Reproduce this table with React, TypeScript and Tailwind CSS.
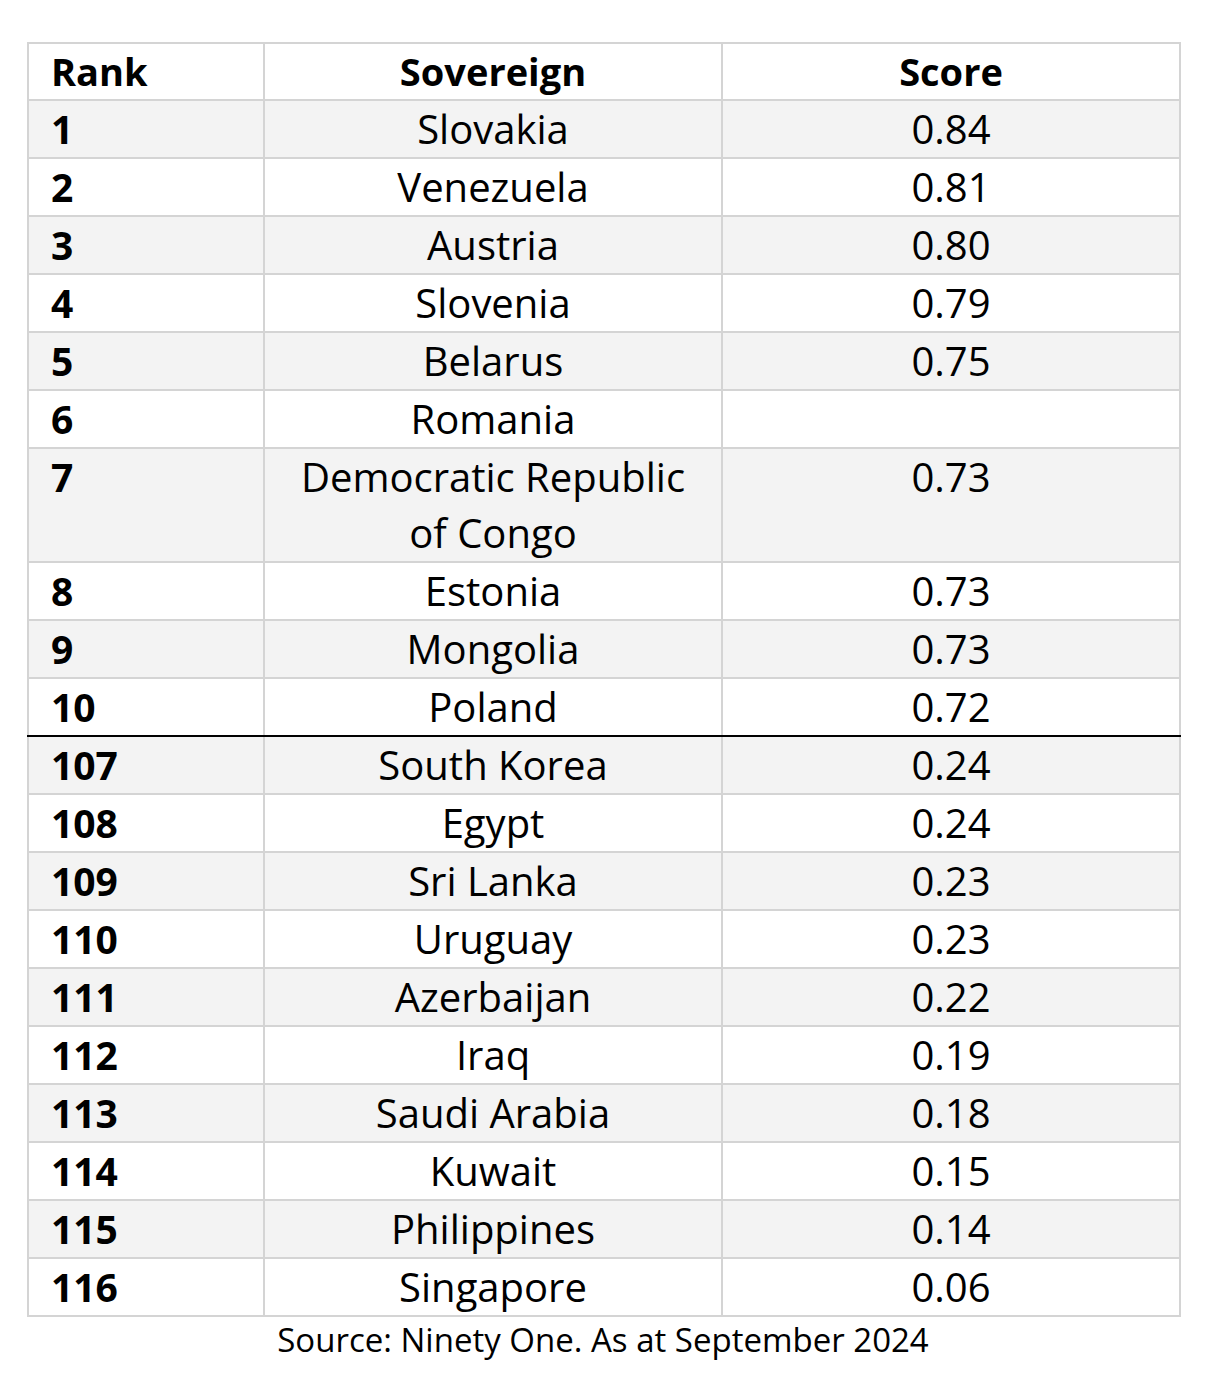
const rows: [string, string, string][] = [
  ["1", "Slovakia", "0.84"],
  ["2", "Venezuela", "0.81"],
  ["3", "Austria", "0.80"],
  ["4", "Slovenia", "0.79"],
  ["5", "Belarus", "0.75"],
  ["6", "Romania", ""],
  ["7", "Democratic Republic of Congo", "0.73"],
  ["8", "Estonia", "0.73"],
  ["9", "Mongolia", "0.73"],
  ["10", "Poland", "0.72"],
  ["107", "South Korea", "0.24"],
  ["108", "Egypt", "0.24"],
  ["109", "Sri Lanka", "0.23"],
  ["110", "Uruguay", "0.23"],
  ["111", "Azerbaijan", "0.22"],
  ["112", "Iraq", "0.19"],
  ["113", "Saudi Arabia", "0.18"],
  ["114", "Kuwait", "0.15"],
  ["115", "Philippines", "0.14"],
  ["116", "Singapore", "0.06"],
];

export default function App() {
  return (
    <div
      className="min-h-[1399px] bg-white pl-[27px] pt-[42px] text-black"
      style={{ fontFamily: "'Open Sans', sans-serif" }}
    >
      <table className="w-[1152px] table-fixed border-collapse border-2 border-[#d4d4d4] text-[40px] leading-[56px]">
        <colgroup>
          <col className="w-[236px]" />
          <col className="w-[458px]" />
          <col className="w-[458px]" />
        </colgroup>
        <thead>
          <tr className="h-[55px] bg-white text-[38px] font-bold">
            <th className="border-2 border-[#d4d4d4] pl-[22px] text-left align-middle leading-[55px]">
              Rank
            </th>
            <th className="border-2 border-[#d4d4d4] text-center align-middle leading-[55px]">Sovereign</th>
            <th className="border-2 border-[#d4d4d4] text-center align-middle leading-[55px]">Score</th>
          </tr>
        </thead>
        <tbody>
          {rows.map(([rank, name, score], i) => {
            const line = rank === "10" ? "border-b-black" : "";
            return (
              <tr
                key={rank}
                className={`${i % 2 === 0 ? "bg-[#f3f3f3]" : "bg-white"} ${
                  rank === "7" ? "h-[112px]" : "h-[56px]"
                }`}
              >
                <td
                  className={`border-2 border-[#d4d4d4] pl-[22px] align-top text-[39px] font-bold ${line}`}
                >
                  {rank}
                </td>
                <td className={`border-2 border-[#d4d4d4] px-4 text-center align-top ${line}`}>
                  {rank === "7" ? (
                    <>
                      Democratic Republic
                      <br />
                      of Congo
                    </>
                  ) : (
                    name
                  )}
                </td>
                <td className={`border-2 border-[#d4d4d4] text-center align-top ${line}`}>{score}</td>
              </tr>
            );
          })}
        </tbody>
      </table>
      <p className="w-[1152px] pt-[3px] text-center text-[33px] leading-[40px]">
        Source: Ninety One. As at September 2024
      </p>
    </div>
  );
}
